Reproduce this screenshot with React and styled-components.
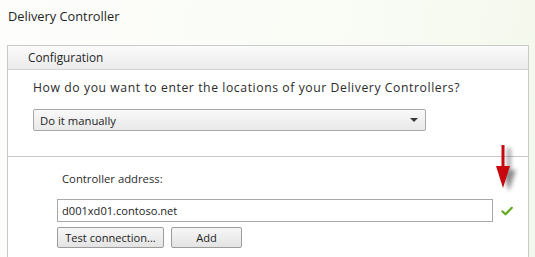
import React from "react";
import styled, { createGlobalStyle } from "styled-components";

const Global = createGlobalStyle`
  html, body { margin: 0; padding: 0; }
  body {
    width: 535px;
    height: 257px;
    overflow: hidden;
    background: linear-gradient(100deg, #fdfefc 0%, #fafcf6 55%, #f3f8ec 100%);
    font-family: "Open Sans", "Segoe UI", sans-serif;
    color: #222;
  }
`;

const Page = styled.div`
  position: relative;
  height: 257px;
  padding: 7px 0 0 7px;
  box-sizing: border-box;
`;

const Title = styled.div`
  font-size: 12.8px;
  color: #1f1f1f;
  padding-left: 1px;
  height: 18px;
  line-height: 18px;
`;

const Panel = styled.div`
  margin-top: 20px;
  width: 522px;
  height: 220px;
  box-sizing: border-box;
  border: 1px solid #c9c9c9;
  border-bottom: none;
  background: #fff;
`;

const PanelHeader = styled.div`
  height: 24px;
  box-sizing: border-box;
  border-bottom: 1px solid #d2d2d2;
  background: linear-gradient(#fbfbfb, #ebebeb);
  padding-left: 20px;
  font-size: 11.8px;
  line-height: 23px;
  color: #262626;
`;

const Section = styled.div`
  padding: ${(p) => p.$pad};
  border-bottom: ${(p) => (p.$divider ? "1px solid #c9c9c9" : "none")};
`;

const Label = styled.div`
  font-size: ${(p) => p.$size || 11.3}px;
  letter-spacing: ${(p) => p.$ls || 0}px;
  color: #2b2b2b;
  line-height: 16px;
  padding-left: ${(p) => p.$indent || 0}px;
`;

const Select = styled.div`
  margin-top: ${(p) => p.$mt}px;
  width: 393px;
  height: 22px;
  box-sizing: border-box;
  border: 1px solid #a8a8a8;
  border-radius: 2px;
  background: linear-gradient(#f9f9f9, #e9e9e9);
  display: flex;
  align-items: center;
  justify-content: space-between;
  padding: 0 7px 0 6px;
  font-size: 11.3px;
  color: #222;
`;

const Caret = styled.span`
  width: 0;
  height: 0;
  border-left: 4px solid transparent;
  border-right: 4px solid transparent;
  border-top: 4px solid #3a3a3a;
`;

const InputRow = styled.div`
  margin-top: ${(p) => p.$mt}px;
  display: flex;
  align-items: center;
  gap: 8px;
`;

const TextInput = styled.div`
  width: 436px;
  height: 23px;
  box-sizing: border-box;
  border: 1px solid #a9a9a9;
  background: #fff;
  font-size: 11.1px;
  line-height: 21px;
  padding-left: 4px;
  color: #222;
`;

const ButtonRow = styled.div`
  margin-top: 5px;
  display: flex;
  gap: 7px;
`;

const Button = styled.div`
  width: ${(p) => p.$w}px;
  height: 21px;
  box-sizing: border-box;
  border: 1px solid #9c9c9c;
  border-radius: 2px;
  background: linear-gradient(#f7f7f7, #e3e3e3);
  font-size: 11.1px;
  line-height: 19px;
  text-align: center;
  color: #222;
`;

const Annotation = styled.svg`
  position: absolute;
  left: 494px;
  top: 143px;
`;

export default function App() {
  return (
    <>
      <Global />
      <Page>
        <Title>Delivery Controller</Title>
        <Panel>
          <PanelHeader>Configuration</PanelHeader>
          <Section $pad="10px 0 25px 25px" $divider>
            <Label $size={12.2} $ls={0.58}>How do you want to enter the locations of your Delivery Controllers?</Label>
            <Select $mt={13}>
              <span>Do it manually</span>
              <Caret />
            </Select>
          </Section>
          <Section $pad="14px 0 0 49px">
            <Label $indent={5}>Controller address:</Label>
            <InputRow $mt={12}>
              <TextInput>d001xd01.contoso.net</TextInput>
              <svg width="12" height="10" viewBox="0 0 12 10">
                <path d="M1.5 5.5 L4.5 8.3 L10.8 1.8" fill="none" stroke="#5fa81c" strokeWidth="2.2" strokeLinecap="round" strokeLinejoin="round" />
              </svg>
            </InputRow>
            <ButtonRow>
              <Button $w={107}>Test connection...</Button>
              <Button $w={71}>Add</Button>
            </ButtonRow>
          </Section>
        </Panel>
        <Annotation width="28" height="54" viewBox="0 0 28 54">
          <defs>
            <filter id="sh" x="-50%" y="-20%" width="200%" height="150%">
              <feGaussianBlur stdDeviation="2" />
            </filter>
          </defs>
          <g transform="translate(6 3)" opacity="0.55" filter="url(#sh)">
            <rect x="7.5" y="2" width="3" height="24" fill="#333" />
            <polygon points="2,24 16,24 9,45" fill="#333" />
          </g>
          <rect x="7.5" y="2" width="3" height="23" fill="#c8080d" />
          <polygon points="2,23 16,23 9,45" fill="#c8080d" />
        </Annotation>
      </Page>
    </>
  );
}
